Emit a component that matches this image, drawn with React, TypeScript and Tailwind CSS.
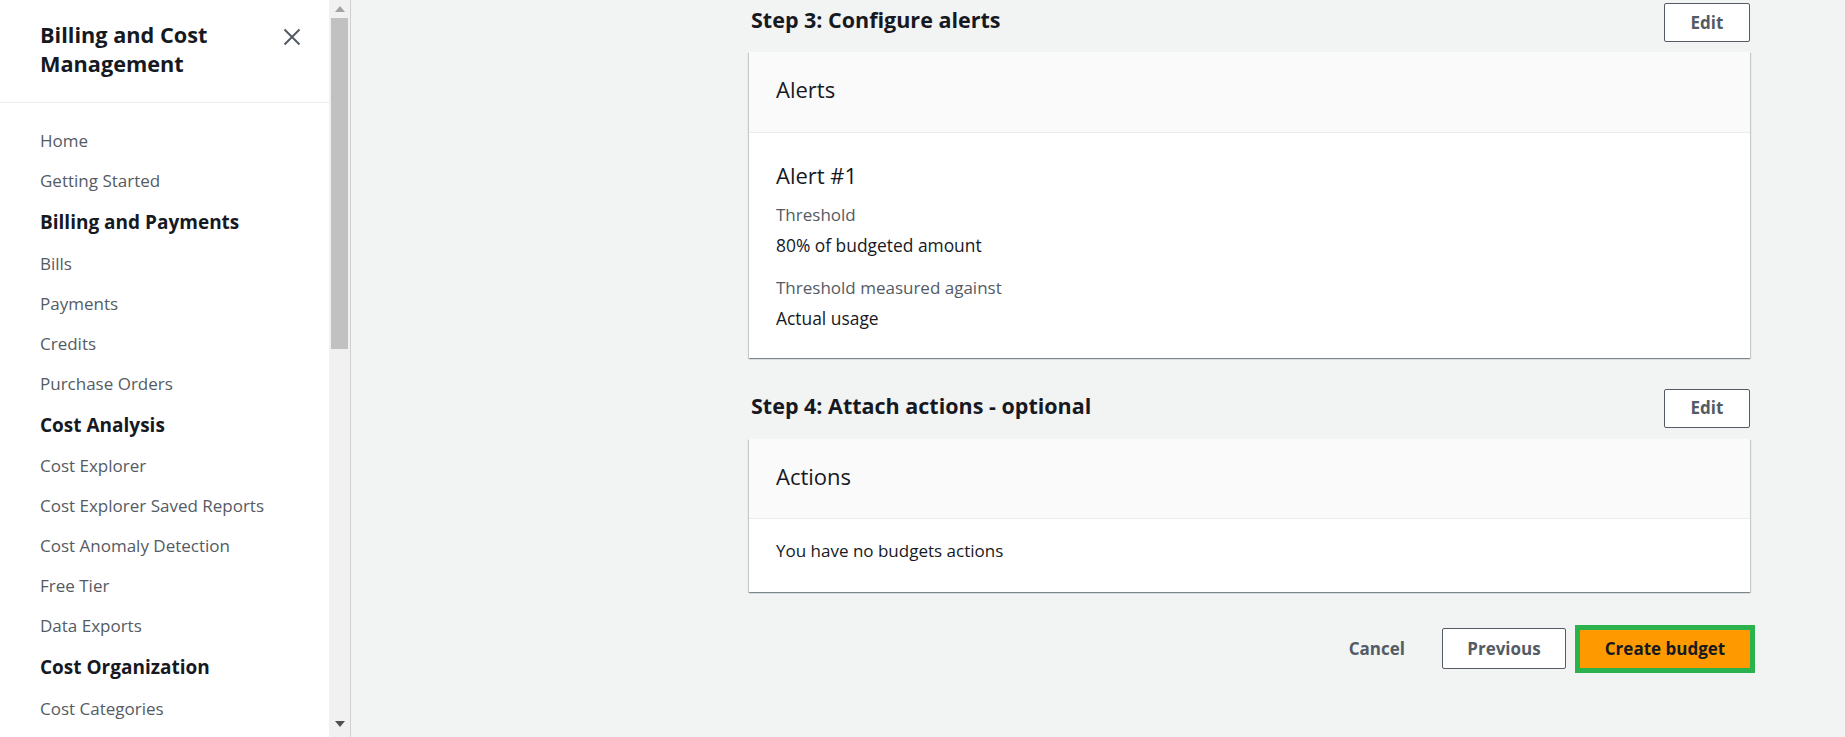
import React from "react";

const navItems: { label: string; header?: boolean }[] = [
  { label: "Home" },
  { label: "Getting Started" },
  { label: "Billing and Payments", header: true },
  { label: "Bills" },
  { label: "Payments" },
  { label: "Credits" },
  { label: "Purchase Orders" },
  { label: "Cost Analysis", header: true },
  { label: "Cost Explorer" },
  { label: "Cost Explorer Saved Reports" },
  { label: "Cost Anomaly Detection" },
  { label: "Free Tier" },
  { label: "Data Exports" },
  { label: "Cost Organization", header: true },
  { label: "Cost Categories" },
];

function EditButton() {
  return (
    <button className="w-[86px] h-[39px] border border-[#545b64] rounded-[2px] bg-white text-[17px] font-bold text-[#545b64] flex items-center justify-center">
      Edit
    </button>
  );
}

const cardShadow =
  "shadow-[0_1px_1px_0_rgba(0,28,36,0.3),1px_1px_1px_0_rgba(0,28,36,0.15),-1px_1px_1px_0_rgba(0,28,36,0.15)]";

export default function App() {
  return (
    <div
      className="flex w-[1845px] h-[737px] overflow-hidden bg-[#f2f3f3]"
      style={{ fontFamily: '"Open Sans", "Noto Sans", sans-serif' }}
    >
      {/* Sidebar */}
      <div className="w-[329px] shrink-0 bg-white h-full">
        <div className="flex items-start justify-between pl-[40px] pr-[28px] pt-[20px] pb-[24px] border-b border-[#eaeded]">
          <div className="text-[21.7px] leading-[29px] font-bold text-[#16191f]">
            Billing and Cost
            <br />
            Management
          </div>
          <svg width="18" height="18" viewBox="0 0 18 18" className="mt-[8px]">
            <path d="M1.5 1.5 L16.5 16.5 M16.5 1.5 L1.5 16.5" stroke="#545b64" strokeWidth="2" fill="none" />
          </svg>
        </div>
        <div className="pt-[18px] pl-[40px]">
          {navItems.map((it) =>
            it.header ? (
              <div key={it.label} className="h-[42.5px] flex items-center text-[19px] font-bold text-[#16191f]">
                {it.label}
              </div>
            ) : (
              <div key={it.label} className="h-[40px] flex items-center text-[17px] text-[#545b64]">
                {it.label}
              </div>
            )
          )}
        </div>
      </div>

      {/* Sidebar scrollbar */}
      <div className="w-[22px] shrink-0 bg-[#f1f1f1] border-r border-[#d0d0d0] flex flex-col items-center h-full">
        <div className="h-[18px] flex items-center justify-center">
          <svg width="10" height="6" viewBox="0 0 10 6">
            <path d="M0 6 L5 0 L10 6 Z" fill="#a3a3a3" />
          </svg>
        </div>
        <div className="w-[17px] h-[331px] bg-[#c1c1c1]" />
        <div className="flex-1" />
        <div className="h-[16px] flex items-start justify-center">
          <svg width="10" height="6" viewBox="0 0 10 6">
            <path d="M0 0 L5 6 L10 0 Z" fill="#505050" />
          </svg>
        </div>
      </div>

      {/* Main */}
      <div className="flex-1 pl-[398px]">
        <div className="w-[1001px]">
          {/* Step 3 */}
          <div className="mt-[3px] h-[39px] flex items-center justify-between">
            <h2 className="pl-[2px] text-[21.5px] font-bold text-[#16191f] -mt-[4px]">Step 3: Configure alerts</h2>
            <EditButton />
          </div>
          <div className={`mt-[10px] bg-white ${cardShadow}`}>
            <div className="h-[81px] bg-[#fafafa] border-b border-[#eaeded] flex items-center pl-[27px] pb-[5px] text-[22px] text-[#16191f]">
              Alerts
            </div>
            <div className="pl-[27px] pt-[28px] pb-[25px]">
              <div className="text-[22px] leading-[28px] text-[#16191f]">Alert #1</div>
              <div className="mt-[11px] text-[17px] leading-[30px] text-[#545b64]">Threshold</div>
              <div className="text-[17.4px] leading-[30px] text-[#16191f]">80% of budgeted amount</div>
              <div className="mt-[13px] text-[17px] leading-[30px] text-[#545b64]">Threshold measured against</div>
              <div className="text-[17.4px] leading-[30px] text-[#16191f]">Actual usage</div>
            </div>
          </div>

          {/* Step 4 */}
          <div className="mt-[31px] h-[38px] flex items-center justify-between">
            <h2 className="pl-[2px] text-[21.5px] font-bold text-[#16191f] -mt-[4px]">Step 4: Attach actions - optional</h2>
            <EditButton />
          </div>
          <div className={`mt-[12px] bg-white ${cardShadow}`}>
            <div className="h-[80px] bg-[#fafafa] border-b border-[#eaeded] flex items-center pl-[27px] pb-[4px] text-[22px] text-[#16191f]">
              Actions
            </div>
            <div className="pl-[27px] pt-[18px] pb-[27px] text-[17px] leading-[28px] text-[#16191f]">
              You have no budgets actions
            </div>
          </div>

          {/* Footer */}
          <div className="mt-[36px] h-[41px] flex items-center justify-end">
            <button className="px-[20px] h-[41px] text-[17px] font-bold text-[#545b64]">Cancel</button>
            <button className="ml-[17px] w-[124px] h-[41px] border border-[#545b64] rounded-[2px] bg-white text-[17px] font-bold text-[#545b64]">
              Previous
            </button>
            <div className="ml-[9px] -mr-[5px] border-[5px] border-[#2bb24c]">
              <button className="block w-[170px] h-[38px] bg-[#ff9900] text-[17px] font-bold text-[#16191f]">
                Create budget
              </button>
            </div>
          </div>
        </div>
      </div>
    </div>
  );
}
